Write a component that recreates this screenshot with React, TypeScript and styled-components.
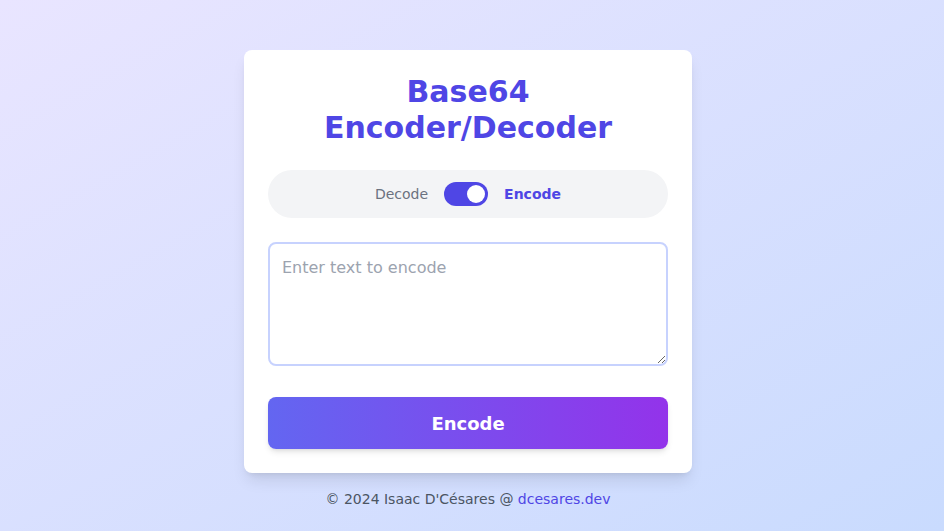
import { useState } from 'react';
import styled, { createGlobalStyle } from 'styled-components';

const GlobalStyle = createGlobalStyle`
  * { box-sizing: border-box; }
  html, body { margin: 0; padding: 0; }
  body {
    font-family: "DejaVu Sans", sans-serif;
    min-height: 100vh;
    background: linear-gradient(to bottom right, #e9e5ff, #c9dbfe);
  }
`;

const Page = styled.div`
  min-height: 100vh;
  display: flex;
  flex-direction: column;
  align-items: center;
  padding: 50px 8px 0 0;
`;

const Card = styled.div`
  width: 448px;
  background: #fff;
  border-radius: 8px;
  padding: 24px;
  box-shadow: 0 10px 15px -3px rgba(0, 0, 0, 0.1), 0 4px 6px -4px rgba(0, 0, 0, 0.1);
`;

const Title = styled.h1`
  margin: 0;
  font-size: 30px;
  line-height: 36px;
  font-weight: 700;
  text-align: center;
  color: #4f46e5;
`;

const ModeBar = styled.div`
  margin-top: 24px;
  height: 48px;
  border-radius: 9999px;
  background: #f3f4f6;
  display: flex;
  align-items: center;
  justify-content: center;
  gap: 16px;
`;

const ModeLabel = styled.span<{ active?: boolean }>`
  font-size: 14px;
  color: ${({ active }) => (active ? '#4f46e5' : '#6b7280')};
  font-weight: ${({ active }) => (active ? 700 : 400)};
`;

const Switch = styled.button<{ on: boolean }>`
  position: relative;
  width: 44px;
  height: 24px;
  border: none;
  padding: 0;
  border-radius: 9999px;
  background: ${({ on }) => (on ? '#4f46e5' : '#d1d5db')};
  cursor: pointer;
  &::after {
    content: '';
    position: absolute;
    top: 3px;
    left: ${({ on }) => (on ? '23px' : '3px')};
    width: 18px;
    height: 18px;
    border-radius: 50%;
    background: #fff;
  }
`;

const TextArea = styled.textarea`
  display: block;
  margin-top: 24px;
  width: 100%;
  height: 124px;
  padding: 12px;
  border: 2px solid #c7d2fe;
  border-radius: 8px;
  font-family: "DejaVu Sans", sans-serif;
  font-size: 16px;
  line-height: 24px;
  color: #111827;
  outline: none;
  &::placeholder {
    color: #9ca3af;
  }
`;

const ActionButton = styled.button`
  display: block;
  margin-top: 31px;
  width: 100%;
  height: 52px;
  border: none;
  border-radius: 8px;
  background: linear-gradient(to right, #6366f1, #9333ea);
  color: #fff;
  font-family: "DejaVu Sans", sans-serif;
  font-size: 18px;
  font-weight: 700;
  box-shadow: 0 4px 6px -1px rgba(0, 0, 0, 0.1), 0 2px 4px -2px rgba(0, 0, 0, 0.1);
  cursor: pointer;
`;

const Footer = styled.footer`
  margin-top: 16px;
  font-size: 14px;
  line-height: 20px;
  color: #4b5563;
  a {
    color: #4f46e5;
    text-decoration: none;
  }
`;

export default function App() {
  const [encode, setEncode] = useState(true);
  const [text, setText] = useState('');

  return (
    <Page>
      <GlobalStyle />
      <Card>
        <Title>
          Base64
          <br />
          Encoder/Decoder
        </Title>
        <ModeBar>
          <ModeLabel active={!encode}>Decode</ModeLabel>
          <Switch on={encode} onClick={() => setEncode(!encode)} aria-label="toggle mode" />
          <ModeLabel active={encode}>Encode</ModeLabel>
        </ModeBar>
        <TextArea
          value={text}
          onChange={(e) => setText(e.target.value)}
          placeholder={encode ? 'Enter text to encode' : 'Enter Base64 to decode'}
        />
        <ActionButton>{encode ? 'Encode' : 'Decode'}</ActionButton>
      </Card>
      <Footer>
        © 2024 Isaac D'Césares @ <a href="https://dcesares.dev">dcesares.dev</a>
      </Footer>
    </Page>
  );
}
